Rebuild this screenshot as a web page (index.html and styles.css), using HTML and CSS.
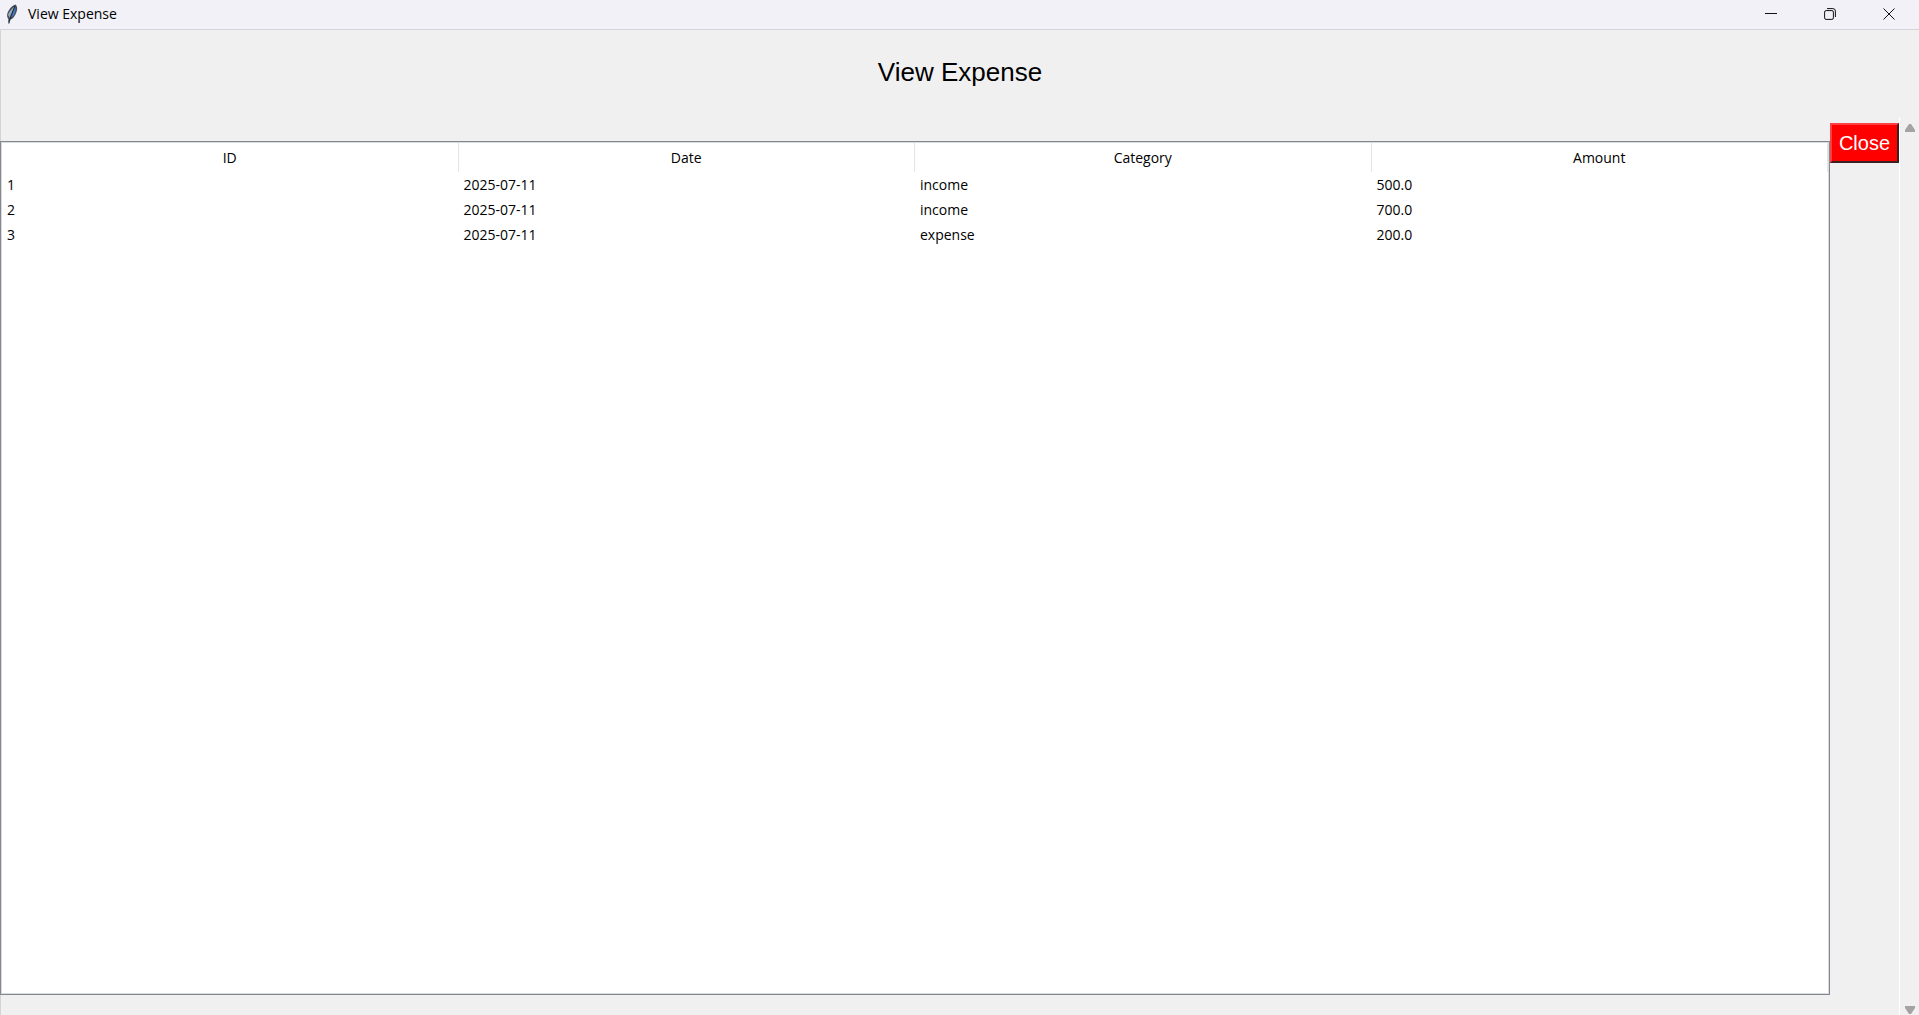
FILE: index.html
```html
<!DOCTYPE html>
<html lang="en">
<head>
<meta charset="utf-8">
<title>View Expense</title>
<link rel="stylesheet" href="styles.css">
</head>
<body>
<header class="titlebar">
  <svg class="feather" viewBox="0 0 12 20" aria-hidden="true">
    <path d="M9.500 0.500C11.500 2 11.500 5 10.500 8C9 12 7 15 4.500 15.500L3.500 19.500L2.200 19.500L2.400 15C0.300 12.500 1 9 3 6C4.800 3.200 7 1.200 9.500 0.500Z" fill="#454c57"/>
    <path d="M8.500 2.500C6 4.500 3 7.500 2 11L3.500 13.500Z" fill="#9aabbc"/>
    <path d="M9.300 2.500C10.500 7 8 12.500 4 14Z" fill="#3f7cc4"/>
    <path d="M9 2L3 17.500" stroke="#1d2a3c" fill="none"/>
  </svg>
  <span class="caption">View Expense</span>
  <button class="control" type="button" aria-label="Minimize">
    <svg viewBox="0 0 12 12"><path d="M0 5.500H12"/></svg>
  </button>
  <button class="control" type="button" aria-label="Restore">
    <svg viewBox="0 0 12 12"><rect x="0.600" y="2.600" width="8.800" height="8.800" rx="1.500"/><path d="M3 0.600H8.900A2.500 2.500 0 0 1 11.400 3.100V9"/></svg>
  </button>
  <button class="control" type="button" aria-label="Close window">
    <svg viewBox="0 0 12 12"><path d="M0.500 0.500L11.500 11.500M11.500 0.500L0.500 11.500"/></svg>
  </button>
</header>
<main class="window">
  <h1 class="heading">View Expense</h1>
  <div class="content">
    <div class="tree">
      <table class="expenses">
        <thead>
          <tr><th>ID</th><th>Date</th><th>Category</th><th>Amount</th></tr>
        </thead>
        <tbody>
          <tr><td>1</td><td>2025-07-11</td><td>income</td><td>500.0</td></tr>
          <tr><td>2</td><td>2025-07-11</td><td>income</td><td>700.0</td></tr>
          <tr><td>3</td><td>2025-07-11</td><td>expense</td><td>200.0</td></tr>
        </tbody>
      </table>
    </div>
    <button class="close" type="button">Close</button>
    <div class="scrollbar">
      <button class="arrow" type="button" aria-label="Scroll up"><svg viewBox="0 0 10 8"><path d="M4 0H6L10 6V8H0V6Z"/></svg></button>
      <button class="arrow" type="button" aria-label="Scroll down"><svg viewBox="0 0 10 8"><path d="M4 8H6L10 2V0H0V2Z"/></svg></button>
    </div>
  </div>
</main>
</body>
</html>
```
FILE: styles.css
```css
* {
  box-sizing: border-box;
}

body {
  margin: 0;
  height: 100vh;
  display: flex;
  flex-direction: column;
  background: #f0f0f0;
  color: #000;
  font: 14px/20px "Open Sans", "Noto Sans", sans-serif;
}

button {
  padding: 0;
  border: 0;
  background: none;
}

.titlebar {
  display: flex;
  align-items: flex-start;
  height: 30px;
  padding-right: 1px;
  background: #f2f1f8;
  border-bottom: 1px solid #d4d4d9;
}

.feather {
  width: 12px;
  height: 20px;
  margin: 4px 10px 0 6px;
}

.caption {
  flex: 1;
  line-height: 28px;
}

.control {
  display: flex;
  align-items: center;
  justify-content: center;
  width: 59px;
  height: 28px;
}

.control svg {
  width: 12px;
  height: 12px;
  fill: none;
  stroke: #111;
  stroke-width: 1;
}

.window {
  flex: 1;
  display: flex;
  flex-direction: column;
  border-left: 1px solid #d4d4d4;
}

.heading {
  margin: 0;
  padding: 27px 0 30px;
  font: 26px/30px "Liberation Sans", Arial, sans-serif;
  text-align: center;
}

.content {
  flex: 1;
  display: flex;
  align-items: flex-start;
}

.tree {
  flex: 1;
  align-self: stretch;
  margin: 24px 0 20px -1px;
  background: #fff;
  border: 1px solid #828790;
  box-shadow: inset 0 0 0 1px #d9dbde;
  padding: 1px;
}

.expenses {
  width: 100%;
  table-layout: fixed;
  border-collapse: separate;
  border-spacing: 0;
}

.expenses th {
  height: 29px;
  padding: 0;
  font-weight: 400;
  border-right: 1px solid #e5e5e5;
}

.expenses td {
  height: 25px;
  padding: 0 5px;
}

.close {
  width: 69px;
  height: 40px;
  margin-top: 6px;
  background: #f00;
  border: 2px solid;
  border-color: #ff4040 #3a2020 #3a2020 #ff4040;
  color: #fff;
  font: 20px/24px "Liberation Sans", Arial, sans-serif;
}

.scrollbar {
  align-self: stretch;
  display: flex;
  flex-direction: column;
  justify-content: space-between;
  align-items: center;
  width: 20px;
  padding: 7px 0 1px;
  border-left: 1px solid #fff;
}

.arrow {
  display: flex;
}

.arrow svg {
  width: 10px;
  height: 8px;
  fill: #a3a3a3;
}
```
